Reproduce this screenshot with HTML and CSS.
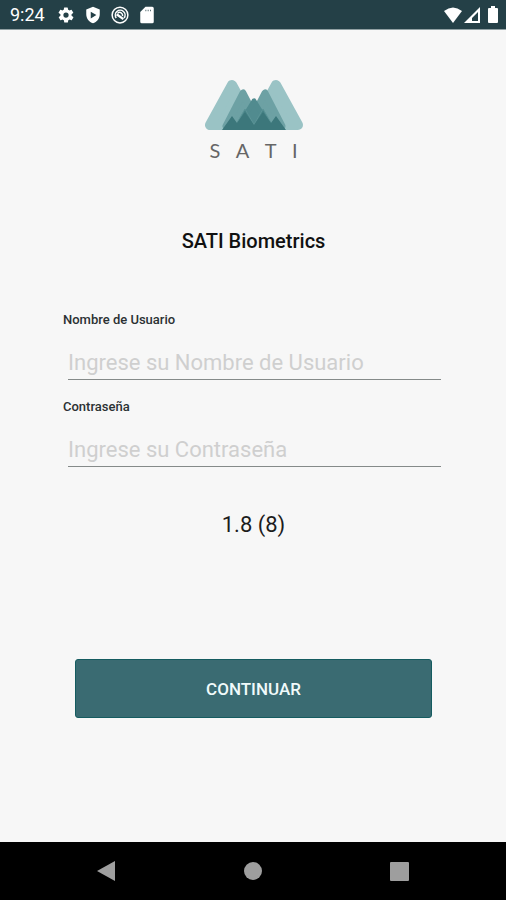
FILE: index.html
```
<!DOCTYPE html>
<html lang="es">
<head>
    <meta charset="UTF-8">
    <meta name="viewport" content="width=device-width, initial-scale=1.0">
    <title>SATI Biometrics</title>
    <link rel="stylesheet" href="styles.css">
</head>
<body>
    <header class="status-bar">
        <div class="status-group">
            <span class="clock">9:24</span>
            <svg class="status-icon" viewBox="0 0 24 24"><path fill-rule="evenodd" d="M19.4 13a7.5 7.5 0 0 0 0-2l2.1-1.6a.5.5 0 0 0 .1-.7l-2-3.4a.5.5 0 0 0-.6-.2l-2.5 1a7.3 7.3 0 0 0-1.7-1l-.4-2.6a.5.5 0 0 0-.5-.5h-4a.5.5 0 0 0-.5.4l-.4 2.7a7.3 7.3 0 0 0-1.7 1l-2.5-1a.5.5 0 0 0-.6.2l-2 3.4a.5.5 0 0 0 .1.7L4.6 11a7.5 7.5 0 0 0 0 2l-2.1 1.6a.5.5 0 0 0-.1.7l2 3.4c.1.2.4.3.6.2l2.5-1c.5.4 1.1.7 1.7 1l.4 2.6c0 .3.2.5.5.5h4c.2 0 .5-.2.5-.4l.4-2.7a7.3 7.3 0 0 0 1.7-1l2.5 1c.2.1.5 0 .6-.2l2-3.4a.5.5 0 0 0-.1-.7zM12 15.5a3.5 3.5 0 1 1 0-7 3.5 3.5 0 0 1 0 7z"/></svg>
            <svg class="status-icon" viewBox="0 0 24 24"><path fill-rule="evenodd" d="M12 1 3 4.5V11c0 5.5 3.8 10.7 9 12 5.2-1.3 9-6.5 9-12V4.5zM9 7.500l7.5 4.5L9 16.5z"/></svg>
            <svg class="status-icon" viewBox="0 0 24 24"><g fill="none" stroke="#fff" stroke-width="2"><circle cx="12" cy="12" r="10.5"/><path d="M7 16a6.5 6.5 0 1 1 10.5 0M9 9.5c3-2.500 7 0 6.500 4"/><path stroke-width="3" d="M7.500 11l9 6.500"/></g></svg>
            <svg class="status-icon" viewBox="0 0 24 24"><path fill-rule="evenodd" d="M19 1h-9L3 8v13a2 2 0 0 0 2 2h14a2 2 0 0 0 2-2V3a2 2 0 0 0-2-2zM10 5h1v2h-1zM13 5h1v2h-1zM16 5h1v2h-1z"/></svg>
        </div>
        <div class="status-signals">
            <svg width="20" height="16" viewBox="0 0 20 16"><path d="M1 4Q10-3 19 4L10 16z"/></svg>
            <svg width="17" height="16" viewBox="0 0 17 16"><path fill-rule="evenodd" d="M16 0v16H0zM14 5 8 11v3h6z"/></svg>
            <svg class="battery" width="10" height="17" viewBox="0 0 10 17"><path d="M3 0h4v2h2a1 1 0 0 1 1 1v13a1 1 0 0 1-1 1H1a1 1 0 0 1-1-1V3a1 1 0 0 1 1-1h2z"/></svg>
        </div>
    </header>

    <main class="login">
        <div class="logo">
            <svg class="logo-mark" viewBox="0 0 100 52" aria-hidden="true">
                <path class="peak-back" d="M28 6 6 46H50zM72 6 50 46H94z"/>
                <path class="peak-middle" d="M39 14 22 47H56zM61 14 44 47H78z"/>
                <path class="peak-center" d="M50 22 34 48H66z"/>
                <path class="peak-shade" d="M41 30 52 49H30zM59 30 70 49H48z"/>
                <path class="peak-front" d="M18 51 28 37 33 44 41 33 50 46 59 33 67 44 72 37 82 51z"/>
            </svg>
            <div class="logo-name"><span>S</span><span>A</span><span>T</span><span>I</span></div>
        </div>

        <h1>SATI Biometrics</h1>

        <form class="login-form">
            <div class="field">
                <label for="username">Nombre de Usuario</label>
                <input type="text" id="username" name="username" placeholder="Ingrese su Nombre de Usuario">
            </div>
            <div class="field">
                <label for="password">Contraseña</label>
                <input type="password" id="password" name="password" placeholder="Ingrese su Contraseña">
            </div>
            <p class="version">1.8 (8)</p>
            <button type="submit" class="continue">CONTINUAR</button>
        </form>
    </main>

    <nav class="nav-bar">
        <button type="button" aria-label="Atrás"><svg width="20" height="22" viewBox="0 0 20 22"><path d="M18 1v20L0 11z"/></svg></button>
        <button type="button" aria-label="Inicio"><svg width="20" height="22" viewBox="0 0 20 22"><circle cx="10" cy="11" r="9"/></svg></button>
        <button type="button" aria-label="Recientes"><svg width="20" height="22" viewBox="0 0 20 22"><rect x="1" y="2" width="19" height="19" rx="1"/></svg></button>
    </nav>
</body>
</html>
```
FILE: styles.css
```
* { box-sizing: border-box; }
body { display: flex; flex-direction: column; min-height: 100vh; margin: 0; font-family: Roboto, sans-serif; color: #1c1c1c; background-color: #f7f7f7; }

.status-bar { display: flex; justify-content: space-between; align-items: center; height: 30px; padding: 0 8px 0 10px; background-color: #244047; border-bottom: 1px solid #91a0a3; color: #fff; }
.status-bar svg { display: block; fill: #fff; }
.status-group { display: flex; align-items: center; gap: 9px; }
.status-icon { width: 18px; height: 18px; }
.clock { margin-right: 3px; font-size: 18px; line-height: 30px; }
.status-signals { display: flex; align-items: center; gap: 1px; }
.battery { margin-left: 6px; }

.login { flex: 1; padding: 49px 62px 0 63px; }
.logo { display: flex; flex-direction: column; align-items: center; }
.logo-mark { display: block; width: 100px; height: 52px; }
.peak-back, .peak-middle, .peak-center { stroke-linejoin: round; }
.peak-back { fill: #9ac3c5; stroke: #9ac3c5; stroke-width: 10; }
.peak-middle { fill: #6da1a4; stroke: #6da1a4; stroke-width: 7; }
.peak-center { fill: #518b8f; stroke: #518b8f; stroke-width: 5; }
.peak-shade { fill: #498488; stroke: #5c9497; stroke-width: 1; }
.peak-front { fill: #3c777b; }
.logo-name { display: flex; justify-content: space-between; width: 88px; margin-top: 7px; font-family: Lato, sans-serif; font-size: 20px; font-weight: 400; line-height: 24px; color: #666; }

h1 { margin: 67px 0 0; font-size: 20px; font-weight: 500; line-height: 24px; text-align: center; color: #111; }

.login-form { margin-top: 59px; }
.field { height: 87px; }
label { display: block; font-size: 13px; font-weight: 500; line-height: 16px; color: #2b3133; }
.field input { display: block; width: calc(100% - 8px); height: 40px; margin: 12px 3px 0 5px; padding: 5px 0 0; border: none; border-bottom: 1px solid #858a89; background: none; font-family: inherit; font-size: 22px; color: #1c1c1c; }
.field input::placeholder { color: #cfcfcf; opacity: 1; }
.version { margin: 25px 0 0; font-size: 22px; line-height: 28px; text-align: center; }
.continue { display: block; width: calc(100% - 24px); height: 59px; margin: 120px auto 0; border: 1px solid #155c60; border-radius: 3px; background-color: #3a6b72; font-family: inherit; font-size: 17px; font-weight: 500; color: #f0fafa; }

.nav-bar { display: flex; justify-content: center; height: 58px; background-color: #000; }
.nav-bar button { display: flex; justify-content: center; align-items: center; width: 146px; padding: 0; border: none; background: none; }
.nav-bar svg { display: block; fill: #9e9e9e; }
```
